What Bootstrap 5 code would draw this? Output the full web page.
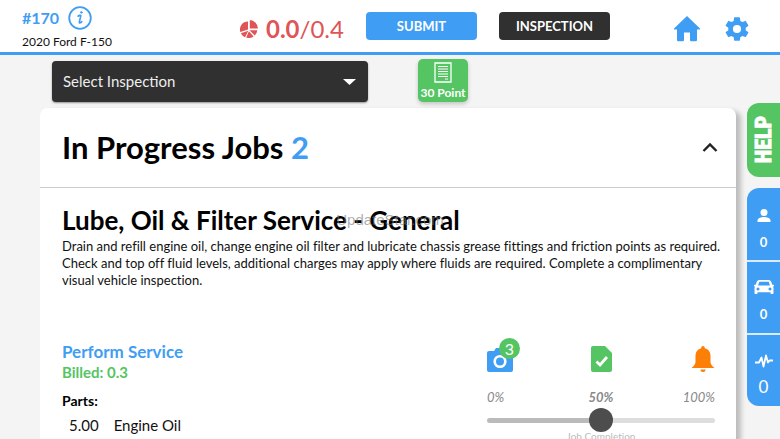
<!DOCTYPE html>
<html lang="en">
<head>
<meta charset="utf-8">
<meta name="viewport" content="width=device-width, initial-scale=1">
<title>Work order #170</title>
<link href="https://cdn.jsdelivr.net/npm/bootstrap@5.3.0/dist/css/bootstrap.min.css" rel="stylesheet">
<style>
:root{--sky:#3f9ef3;--leaf:#55c463;--coral:#e05457;--coal:#303030}
body{font-family:Lato,"Open Sans",sans-serif;font-variant-ligatures:none;background:#f4f4f4;color:#111;height:100vh;overflow:hidden}
svg{display:block;flex:none}
.topbar{height:55px;border-bottom:3px solid var(--sky)}
.order{width:240px;padding:6px 0 0 22px}
.order-no{font-size:16px;line-height:22px;gap:9px;color:var(--sky)}
.vehicle{font-size:12px;line-height:20px;margin-top:2px}
.hours{width:126px;padding-top:12px;color:var(--coral);font-size:24px;line-height:34px}
.action{width:111px;height:28px;margin:12px 22px 0 0;font-size:13px;line-height:16px;padding:0;border:0;border-radius:4px}
.btn-sky{background:var(--sky)}
.btn-coal{background:var(--coal)}
.tools{padding:15px 29px 0 0;gap:22px;color:var(--sky)}
.picker-bar{height:48px;padding:4px 52px 0;gap:50px}
.picker{width:316px;height:41px;margin-top:2px}
.picker select{background:var(--coal);color:#eee;font-size:15px;border:0;border-radius:4px;padding:0 11px;appearance:none;box-shadow:0 1px 2px #0006}
.picker::after{content:"";position:absolute;right:12px;top:18px;width:13px;height:6px;background:#fff;clip-path:polygon(0 0,100% 0,50% 100%);pointer-events:none}
.point{width:50px;height:43px;background:var(--leaf);border:0;border-radius:5px;font-size:12px;line-height:15px;padding:3px 0 0;box-shadow:0 2px 4px #0003;white-space:nowrap}
.point span{margin-top:2px}
.jobs{margin:5px 11px 0 40px;border:0;border-radius:8px 8px 0 0;box-shadow:5px 3px 5px #0000003a}
.jobs-head{height:80px;padding:0 17px 2px 22px;border-bottom:1px solid #ccc}
.jobs-head h1{font-size:31px;line-height:36px}
.jobs-body{padding:15px 21px 0 22px}
.jobs-body h2{font-size:26px;line-height:34px}
.desc{font-size:13px;line-height:17px;margin:1px -12px 0 0}
.work{margin-top:52px}
.op{font-size:17px;line-height:22px;color:var(--sky)}
.billed{font-size:15px;line-height:18px;color:var(--leaf)}
.parts{font-size:15px;line-height:20px;margin-top:6px}
.parts caption{font-size:14px}
.parts td{padding:4px 15px 0 7px}
.progress-box{width:228px}
.icon-row{height:36px}
.count{top:-10px;right:-7px;width:21px;height:21px;font-size:16px;line-height:21px;background:var(--leaf)}
.scale{font-size:13px;line-height:16px;margin-top:12px;color:#888}
.slider{appearance:none;height:24px;background:transparent;margin-top:3px;position:relative;z-index:1}
.slider::-webkit-slider-runnable-track{height:5px;border-radius:3px;background:linear-gradient(90deg,#bbb 50%,#ddd 50%)}
.slider::-webkit-slider-thumb{appearance:none;width:24px;height:24px;margin-top:-10px;border-radius:50%;background:#4d4d4d}
.slider-note{font-size:10px;line-height:14px;color:#bbb;margin-top:-3px}
.rail{width:33px}
.help{height:74px;border:0;border-radius:12px 0 0 12px;background:var(--leaf)}
.help span{display:block;writing-mode:vertical-rl;transform:rotate(180deg);font:bold 22px/33px "Roboto Condensed","Open Sans Condensed","Liberation Sans Narrow",Roboto,sans-serif;font-stretch:normal;-webkit-text-stroke:1px #fff}
.stats{margin-top:11px;border-radius:12px 0 0 12px;background:var(--sky);overflow:hidden}
.stat{height:73px;color:#fff;font-size:13px;line-height:18px;padding-top:14px;gap:5px}
.stat:first-child{height:72px}
.stat + .stat{border-top:2px solid #d9ecff;padding-top:12px}
.stat-light{font-size:17px}
.watermark{position:absolute;left:0;right:0;top:210px;font:15px/20px "Liberation Sans",sans-serif;color:#7779;pointer-events:none}
</style>
<script src="https://cdn.jsdelivr.net/npm/bootstrap@5.3.0/dist/js/bootstrap.bundle.min.js"></script>
</head>
<body class="d-flex flex-column position-relative">
<header class="topbar bg-white d-flex align-items-start flex-shrink-0">
  <div class="order">
    <div class="order-no fw-bold d-flex align-items-center"><span>#170</span>
      <a href="#" aria-label="Order information"><svg width="24" height="24" viewBox="0 0 24 24" fill="none" stroke="#3f9ef3" stroke-linecap="round"><circle cx="12" cy="12" r="10.8" stroke-width="1.8"/><path d="M10 10.2c1.2-.7 2.6-1.300 2.800-.7.2.8-1.600 5.600-1.500 6.900.1 1.100 1.500.3 2.500-.8" stroke-width="1.600"/><circle cx="13.400" cy="6.400" r=".8" fill="#3f9ef3"/></svg></a>
    </div>
    <div class="vehicle">2020 Ford F-150</div>
  </div>
  <div class="hours d-flex align-items-center gap-2">
    <svg width="18" height="18" viewBox="0 0 18 18" fill="currentColor"><path d="M9.800 0A8.700 8.700 0 0 1 18 8.500H9.800zM8 1.500v8L.3 12A8 8 0 0 1 8 1.500zM.8 13.300l7.500-2.500-3.200 6.400A8 8 0 0 1 .8 13.300zM9.500 10.200H17.300a8 8 0 0 1-2.600 5.300zM8.900 11.200l4.700 5.200a8 8 0 0 1-7.400 1.200z"/></svg>
    <div><b>0.0</b>/0.4</div>
  </div>
  <button type="button" class="btn btn-sky action fw-bold text-white">SUBMIT</button>
  <button type="button" class="btn btn-coal action fw-bold text-white">INSPECTION</button>
  <nav class="tools d-flex ms-auto" aria-label="Main">
    <a href="#" class="text-reset" aria-label="Home"><svg width="28" height="27" viewBox="0 0 28 27" fill="currentColor"><path d="M14 1 27 13.500c.3.4.1.9-.4.900H24V25a1.300 1.300 0 0 1-1.300 1.300h-4.400A1.300 1.300 0 0 1 17 25v-7.500h-6V25a1.300 1.300 0 0 1-1.300 1.300H5.300A1.300 1.300 0 0 1 4 25V14.400H1.400c-.5 0-.7-.5-.4-.9z"/></svg></a>
    <a href="#" class="text-reset" aria-label="Settings"><svg width="28" height="28" viewBox="0 0 24 24" fill="currentColor"><path d="M19.430 12.980c.04-.32.07-.64.07-.98s-.03-.66-.07-.98l2.110-1.650c.19-.15.24-.42.12-.64l-2-3.460c-.12-.22-.39-.3-.61-.22l-2.490 1c-.52-.4-1.080-.73-1.690-.98l-.38-2.650C14.460 2.180 14.250 2 14 2h-4c-.25 0-.46.18-.49.42l-.38 2.650c-.61.25-1.170.59-1.690.98l-2.490-1c-.23-.09-.49 0-.61.22l-2 3.460c-.13.22-.07.49.12.64l2.110 1.650c-.04.32-.07.65-.07.98s.03.66.07.98l-2.110 1.650c-.19.15-.24.42-.12.64l2 3.460c.12.22.39.3.61.22l2.490-1c.52.4 1.080.73 1.690.98l.38 2.650c.03.24.24.42.49.42h4c.25 0 .46-.18.49-.42l.38-2.650c.61-.25 1.170-.59 1.690-.98l2.490 1c.23.09.49 0 .61-.22l2-3.460c.12-.22.07-.49-.12-.64zM12 15.500a3.500 3.500 0 1 1 0-7 3.500 3.500 0 0 1 0 7z"/></svg></a>
  </nav>
</header>

<div class="picker-bar d-flex align-items-start flex-shrink-0">
  <div class="picker position-relative">
    <select class="w-100 h-100" aria-label="Select Inspection"><option>Select Inspection</option></select>
  </div>
  <button type="button" class="point fw-bold text-white d-flex flex-column align-items-center">
    <svg width="18" height="21" viewBox="0 0 18 21" fill="none" stroke="#fff"><path d="M1 1h16v19H1z" stroke-width="1.300"/><path d="M4 4.500h10M4 7h10M4 9.500h10M4 12h10M4 14.500h10M11 17h3"/></svg>
    <span>30 Point</span>
  </button>
</div>

<div class="d-flex flex-grow-1 align-items-start">
  <main class="jobs card flex-grow-1 align-self-stretch">
    <div class="jobs-head d-flex align-items-center justify-content-between">
      <h1 class="fw-bold m-0 text-black">In Progress Jobs <span style="color:var(--sky)">2</span></h1>
      <button type="button" class="btn p-0 border-0" aria-label="Collapse"><svg width="18" height="18" viewBox="0 0 18 18" fill="none" stroke="#222" stroke-width="2.400"><path d="m2.500 13 6.500-6.500 6.500 6.500"/></svg></button>
    </div>
    <div class="jobs-body">
      <h2 class="fw-bold m-0 text-black">Lube, Oil &amp; Filter Service - General</h2>
      <p class="desc">Drain and refill engine oil, change engine oil filter and lubricate chassis grease fittings and friction points as required. Check and top off fluid levels, additional charges may apply where fluids are required. Complete a complimentary visual vehicle inspection.</p>
      <div class="work d-flex justify-content-between">
        <div>
          <div class="op fw-bold">Perform Service</div>
          <div class="billed fw-bold">Billed: 0.3</div>
          <table class="parts">
            <caption class="caption-top p-0 pt-1 fw-bold text-black">Parts:</caption>
            <tbody><tr><td>5.00</td><td class="ps-0">Engine Oil</td></tr></tbody>
          </table>
        </div>
        <div class="progress-box">
          <div class="icon-row row g-0 align-items-center">
            <div class="col text-start"><button type="button" class="btn p-0 border-0 position-relative" aria-label="Photos">
              <svg width="26" height="24" viewBox="0 0 26 24"><path d="M2 3h5l2-3h8l2 3h5a2 2 0 0 1 2 2v17a2 2 0 0 1-2 2H2a2 2 0 0 1-2-2V5a2 2 0 0 1 2-2z" fill="#3f9ef3"/><circle cx="13" cy="13.500" r="5.300" fill="none" stroke="#fff" stroke-width="2.600"/></svg>
              <span class="count position-absolute rounded-circle text-white">3</span>
            </button></div>
            <div class="col text-center"><button type="button" class="btn p-0 border-0" aria-label="Approve"><svg width="21" height="26" viewBox="0 0 21 26"><path d="M2 0h12l7 7v17a2 2 0 0 1-2 2H2a2 2 0 0 1-2-2V2a2 2 0 0 1 2-2z" fill="#55c463"/><path d="m5.500 15.500 3.500 3.500 7-8" fill="none" stroke="#fff" stroke-width="2.800"/></svg></button></div>
            <div class="col text-end"><button type="button" class="btn p-0 border-0" aria-label="Alerts"><svg width="24" height="26" viewBox="0 0 24 26" fill="#fc7f08"><path d="M12 0c1.100 0 1.800.8 1.800 2.200C17.500 3.200 19.500 6 19.500 9.500V16c0 2.200 1.500 3.800 4 6H.5c2.500-2.200 4-3.800 4-6V9.500c0-3.500 2-6.300 5.700-7.300C10.200.8 10.900 0 12 0zM9.500 23.500h5a2.500 2.500 0 0 1-5 0z"/></svg></button></div>
          </div>
          <div class="scale row g-0 fst-italic"><span class="col">0%</span><b class="col text-center">50%</b><span class="col text-end">100%</span></div>
          <input type="range" class="slider w-100 d-block" id="completion" min="0" max="100" value="50">
          <label class="slider-note d-block text-center" for="completion">Job Completion</label>
        </div>
      </div>
    </div>
  </main>
  <aside class="rail flex-shrink-0">
    <button type="button" class="help w-100 p-0 text-white d-flex align-items-center justify-content-center"><span>HELP</span></button>
    <div class="stats">
      <a href="#" class="stat d-flex flex-column align-items-center text-decoration-none fw-bold"><svg width="24" height="26" viewBox="0 0 24 26" fill="#fff"><circle cx="12" cy="10.500" r="3.500"/><path d="M5.500 20v-1.500c0-2.500 4-3.500 6.500-3.500s6.500 1 6.500 3.500V20z"/></svg>0</a>
      <a href="#" class="stat d-flex flex-column align-items-center text-decoration-none fw-bold"><svg width="24" height="26" viewBox="0 0 24 26" fill="#fff"><path fill-rule="evenodd" d="M7.500 6h9c1.500 0 2.300.8 2.800 2l1 2.800h1.200c.7 0 .7 1.700 0 1.700H21l.5 1.500V19c0 .6-.4 1-1 1h-1c-.6 0-1-.4-1-1v-.8h-13V19c0 .6-.4 1-1 1h-1c-.6 0-1-.4-1-1v-5l.5-1.500h-.5c-.7 0-.7-1.700 0-1.700h1.200l1-2.800C5.200 6.800 6 6 7.500 6zM7.300 7.800 6 11.500h12l-1.300-3.700zM6 13.500a1.500 1.500 0 1 0 .01 0zm12 0a1.500 1.500 0 1 0 .01 0z"/></svg>0</a>
      <a href="#" class="stat stat-light d-flex flex-column align-items-center text-decoration-none"><svg width="18" height="26" viewBox="0 0 18 26" fill="none" stroke="#fff" stroke-width="1.800" stroke-linejoin="round"><path d="M0 15.500h4l2.500-5 2 9 2.500-11 2 7 1.500-2H18"/></svg>0</a>
    </div>
  </aside>
</div>
<div class="watermark text-center">UpdateStar.com</div>
</body>
</html>
